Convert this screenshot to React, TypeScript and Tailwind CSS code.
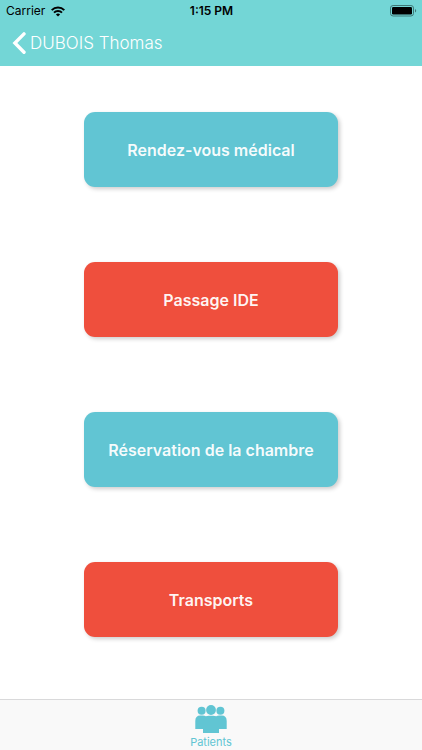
import clsx from 'clsx';

const actions = [
  { label: 'Rendez-vous médical', color: 'bg-[#61c5d3]' },
  { label: 'Passage IDE', color: 'bg-[#ef4f3d]' },
  { label: 'Réservation de la chambre', color: 'bg-[#61c5d3]' },
  { label: 'Transports', color: 'bg-[#ef4f3d]' },
];

function WifiIcon() {
  return (
    <svg width="14" height="11" viewBox="0 0 14 11" fill="none" stroke="#000" strokeWidth="2" aria-hidden="true">
      <path d="M0.7 4.1a9 9 0 0 1 12.6 0" />
      <path d="M3 6.6a5.7 5.7 0 0 1 8 0" />
      <path d="M7 10.6 4.9 8.5a3 3 0 0 1 4.2 0z" fill="#000" stroke="none" />
    </svg>
  );
}

function BatteryIcon() {
  return (
    <svg width="27" height="12" viewBox="0 0 27 12" aria-hidden="true">
      <rect x="0.5" y="0.5" width="23" height="10.5" rx="2.6" fill="none" stroke="#3f7876" />
      <rect x="2" y="2" width="20" height="7.5" rx="1.2" fill="#000" />
      <path d="M25 4v3.6c1.6-.6 1.6-3 0-3.6z" fill="#3f7876" />
    </svg>
  );
}

function PatientsIcon() {
  return (
    <svg width="32" height="28" viewBox="0 0 32 28" fill="#61c5d3" className="shrink-0" aria-hidden="true">
      <circle cx="6.6" cy="5.8" r="4" />
      <circle cx="25.4" cy="5.8" r="4" />
      <circle cx="16" cy="5" r="4.9" />
      <path d="M.3 16c0-3.500 1.800-5.400 4.800-5.400h2.700c1.300 0 2.300.3 3 .7.800-.4 1.900-.6 3-.6h4.400c1.200 0 2.200.2 3 .6.800-.5 1.800-.7 3-.7h2.700c3 0 4.800 1.900 4.800 5.400v8h-7.700v4H8v-4H.3z" />
    </svg>
  );
}

export default function App() {
  return (
    <div className="flex min-h-screen flex-col bg-white font-['Inter','Liberation_Sans',sans-serif]">
      <header className="bg-[#73d6d6] pb-3">
        <div className="grid h-[22px] grid-cols-3 items-center pr-[5px] pl-[6px] text-[12px] text-black">
          <div className="flex items-center gap-[6px]">
            <span>Carrier</span>
            <WifiIcon />
          </div>
          <span className="text-center font-semibold">1:15 PM</span>
          <div className="flex justify-end">
            <BatteryIcon />
          </div>
        </div>
        <button type="button" className="mt-[10px] ml-3 flex h-[22px] items-center gap-1 text-[17px] font-light text-white">
          <svg width="14" height="22" viewBox="0 0 14 22" fill="none" stroke="#fff" strokeWidth="3.4" strokeLinecap="round" aria-hidden="true">
            <path d="M12 1.900 2.900 11l9.100 9.200" />
          </svg>
          <span className="pt-[2px]">DUBOIS Thomas</span>
        </button>
      </header>

      <main className="flex flex-1 flex-col items-center gap-[75px] pt-[46px] pb-8">
        {actions.map((action) => (
          <button
            key={action.label}
            type="button"
            className={clsx(
              'h-[75px] w-3/5 rounded-[11px] text-[16px] font-semibold text-white/95 shadow-[2px_2px_4px_rgba(0,0,0,0.2)]',
              action.color
            )}
          >
            {action.label}
          </button>
        ))}
      </main>

      <nav className="flex h-[51px] justify-center border-t border-[#d9d9da] bg-[#f9f9f9]">
        <a href="#patients" className="flex flex-col items-center gap-px pt-[5px] text-[11px] leading-4 text-[#61c5d3]">
          <PatientsIcon />
          Patients
        </a>
      </nav>
    </div>
  );
}
